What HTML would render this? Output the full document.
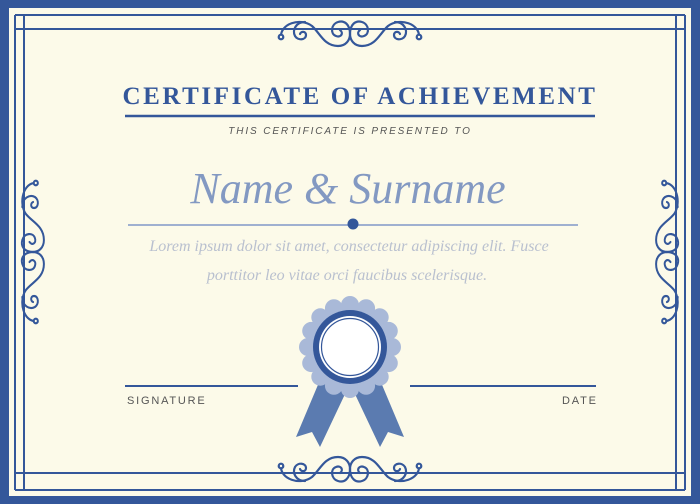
<!DOCTYPE html>
<html><head><meta charset="utf-8"><style>
html,body{margin:0;padding:0}
body{width:700px;height:504px;position:relative;overflow:hidden;background:#fcfae9;font-family:"Liberation Sans",sans-serif}
.t{position:absolute;left:0;width:700px;text-align:center;white-space:nowrap}
</style></head><body>
<svg width="700" height="504" style="position:absolute;left:0;top:0">
<defs>
<g id="orn" fill="none" stroke="#34579a" stroke-width="2.2" stroke-linecap="round">
  <g id="half">
    <path d="M-69,22 C-70,9 -50,2 -38,11 C-30,18 -26,31 -12,31 C-4,31 0,25 0,19"/>
    <path d="M-45,7 C-54,7 -58,15 -55,21 C-52,26 -44,25 -44,20 C-44,16 -49,16 -50,19"/>
    <path d="M0,19 C0,9 -6,5 -12,7 C-19,9 -20,19 -14,21 C-9,23 -6,18 -10,15"/>
    <circle cx="-69" cy="22" r="2.3" fill="#fcfae9"/>
  </g>
  <use href="#half" transform="scale(-1,1)"/>
</g>
</defs>
<rect x="0" y="0" width="700" height="504" fill="#34579a"/>
<rect x="9" y="8" width="682" height="488" fill="#fcfae9"/>
<g stroke="#34579a" stroke-width="2" fill="none">
<line x1="15" y1="15" x2="685" y2="15"/><line x1="15" y1="29" x2="685" y2="29"/>
<line x1="15" y1="473" x2="685" y2="473"/><line x1="15" y1="490" x2="685" y2="490"/>
<line x1="15" y1="15" x2="15" y2="490"/><line x1="24" y1="15" x2="24" y2="490"/>
<line x1="685" y1="15" x2="685" y2="490"/><line x1="676" y1="15" x2="676" y2="490"/>
</g>
<rect x="272" y="16" width="156" height="12" fill="#fcfae9"/>
<rect x="272" y="474" width="156" height="15" fill="#fcfae9"/>
<use href="#orn" transform="translate(350,15)"/>
<use href="#orn" transform="translate(350,488) scale(1,-1)"/>
<use href="#orn" transform="translate(16,252) rotate(-90) scale(1,0.9)"/>
<use href="#orn" transform="translate(684,252) rotate(90) scale(1,0.9)"/>
<line x1="125" y1="116" x2="595" y2="116" stroke="#34579a" stroke-width="2.5"/>
<line x1="128" y1="225" x2="578" y2="225" stroke="#9fb0d0" stroke-width="2"/>
<circle cx="353" cy="224" r="5.5" fill="#34579a"/>
<line x1="125" y1="386" x2="298" y2="386" stroke="#34579a" stroke-width="2"/>
<line x1="410" y1="386" x2="596" y2="386" stroke="#34579a" stroke-width="2"/>
<polygon points="296,437 320,380 346,392 320,447 312,432" fill="#5b7bb0"/>
<polygon points="404,437 380,380 354,392 380,447 388,432" fill="#5b7bb0"/>
<g fill="#a9b9d8">
<circle cx="350" cy="347" r="44"/>
<g id="sc"><circle cx="350" cy="305" r="9"/><circle cx="350" cy="389" r="9"/><circle cx="308" cy="347" r="9"/><circle cx="392" cy="347" r="9"/></g>
<use href="#sc" transform="rotate(22.5 350 347)"/><use href="#sc" transform="rotate(45 350 347)"/><use href="#sc" transform="rotate(67.5 350 347)"/>
</g>
<circle cx="350" cy="347" r="37" fill="#34579a"/>
<circle cx="350" cy="347" r="31" fill="#fff"/>
<circle cx="350" cy="347" r="28.5" fill="none" stroke="#34579a" stroke-width="1.2"/>
</svg>
<div class="t" style="top:83px;left:10px;font-family:'Liberation Serif',serif;font-weight:bold;font-size:25px;letter-spacing:2.6px;color:#34579a">CERTIFICATE OF ACHIEVEMENT</div>
<div class="t" style="top:126px;font-size:10px;letter-spacing:1.9px;color:#555;font-style:italic">THIS CERTIFICATE IS PRESENTED TO</div>
<div class="t" style="top:163px;left:-2px;font-family:'Liberation Serif',serif;font-style:italic;font-size:44px;color:#8399c2">Name &amp; Surname</div>
<div class="t" style="top:238px;left:-1px;font-family:'Liberation Serif',serif;font-style:italic;font-size:16px;color:#b9c0cf">Lorem ipsum dolor sit amet, consectetur adipiscing elit. Fusce</div>
<div class="t" style="top:267px;left:-3px;font-family:'Liberation Serif',serif;font-style:italic;font-size:16px;color:#b9c0cf">porttitor leo vitae orci faucibus scelerisque.</div>
<div style="position:absolute;left:127px;top:395px;font-size:11px;letter-spacing:1.8px;color:#555">SIGNATURE</div>
<div style="position:absolute;left:562px;top:395px;font-size:11px;letter-spacing:1.8px;color:#555">DATE</div>
</body></html>
